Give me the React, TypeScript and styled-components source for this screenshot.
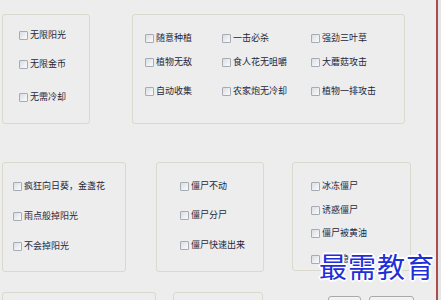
import React from "react";
import styled, { createGlobalStyle } from "styled-components";

const GlobalStyle = createGlobalStyle`
    html, body {
        margin: 0;
        padding: 0;
        background: #ededed;
        overflow: hidden;
    }
    body {
        font-family: "Noto Sans CJK SC", "Liberation Sans", sans-serif;
    }
`;

const Window = styled.div`
    position: relative;
    width: 441px;
    height: 300px;
    display: flex;
    background: #ededed;
    overflow: hidden;
`;

const Panel = styled.div`
    width: 436px;
    height: 300px;
    display: flex;
    flex-direction: column;
    padding-top: 14px;
    box-sizing: border-box;
`;

const Edge = styled.div`
    width: 2px;
    height: 300px;
    background: #ad4c4c;
`;

const Rest = styled.div`
    flex: 1;
    background: #e6e6e6;
`;

const Row = styled.div<{ $mt: number }>`
    display: flex;
    align-items: flex-start;
    flex: none;
    margin-top: ${(p) => p.$mt}px;
    padding-left: 2px;
`;

const Group = styled.div<{ $w: number; $h: number; $ml: number; $pl: number }>`
    box-sizing: border-box;
    flex: none;
    width: ${(p) => p.$w}px;
    height: ${(p) => p.$h}px;
    margin-left: ${(p) => p.$ml}px;
    padding-left: ${(p) => p.$pl}px;
    border: 1px solid #d9d9cd;
    border-radius: 3px;
    display: flex;
`;

const Column = styled.div<{ $w?: number }>`
    display: flex;
    flex-direction: column;
    width: ${(p) => (p.$w ? `${p.$w}px` : "auto")};
`;

const Item = styled.label<{ $mt: number }>`
    display: flex;
    align-items: center;
    gap: 2px;
    height: 12px;
    margin-top: ${(p) => p.$mt}px;
    font-size: 9px;
    line-height: 12px;
    color: #262638;
    white-space: nowrap;
`;

const Box = styled.span`
    box-sizing: border-box;
    width: 9px;
    height: 9px;
    border: 1px solid #a5acb5;
    border-radius: 1px;
    background: linear-gradient(135deg, #d9dde3 0%, #eef0f2 60%, #f9f9f9 100%);
    flex: none;
`;

const Button = styled.div<{ $w: number; $ml: number }>`
    box-sizing: border-box;
    width: ${(p) => p.$w}px;
    height: 16px;
    margin-left: ${(p) => p.$ml}px;
    margin-top: 4px;
    border: 1px solid #a9a9a9;
    border-radius: 3px;
    background: linear-gradient(#f4f4f4, #e2e2e2);
`;

const Watermark = styled.div`
    position: absolute;
    left: 319px;
    top: 252px;
    font-family: "Noto Sans CJK SC", serif;
    font-size: 28px;
    line-height: 1;
    letter-spacing: 1px;
    color: #1f2fd8;
    text-shadow: 1px 1px 0 #fff, -1px -1px 0 #fff, 1px -1px 0 #fff, -1px 1px 0 #fff,
        0 2px 0 #fff, 2px 0 0 #fff, 0 -2px 0 #fff, -2px 0 0 #fff;
`;

type Opt = { label: string; y: number };

function List({ items, w }: { items: Opt[]; w?: number }) {
    let prev = 0;
    return (
        <Column $w={w}>
            {items.map((it, i) => {
                const mt = i === 0 ? it.y - 7 : it.y - prev - 12;
                prev = it.y;
                return (
                    <Item key={it.label} $mt={mt}>
                        <Box />
                        {it.label}
                    </Item>
                );
            })}
        </Column>
    );
}

export default function App() {
    return (
        <>
            <GlobalStyle />
            <Window>
                <Panel>
                    <Row $mt={0}>
                        <Group $w={88} $h={110} $ml={0} $pl={16}>
                            <List
                                items={[
                                    { label: "无限阳光", y: 21 },
                                    { label: "无限金币", y: 50 },
                                    { label: "无需冷却", y: 83 },
                                ]}
                            />
                        </Group>
                        <Group $w={273} $h={110} $ml={42} $pl={12}>
                            <List
                                w={77}
                                items={[
                                    { label: "随意种植", y: 24 },
                                    { label: "植物无敌", y: 48 },
                                    { label: "自动收集", y: 77 },
                                ]}
                            />
                            <List
                                w={89}
                                items={[
                                    { label: "一击必杀", y: 24 },
                                    { label: "食人花无咀嚼", y: 48 },
                                    { label: "农家炮无冷却", y: 77 },
                                ]}
                            />
                            <List
                                items={[
                                    { label: "强劲三叶草", y: 24 },
                                    { label: "大蘑菇攻击", y: 48 },
                                    { label: "植物一排攻击", y: 77 },
                                ]}
                            />
                        </Group>
                    </Row>
                    <Row $mt={38}>
                        <Group $w={124} $h={110} $ml={0} $pl={10}>
                            <List
                                items={[
                                    { label: "疯狂向日葵，金盏花", y: 24 },
                                    { label: "雨点般掉阳光", y: 54 },
                                    { label: "不会掉阳光", y: 84 },
                                ]}
                            />
                        </Group>
                        <Group $w={108} $h={110} $ml={30} $pl={23}>
                            <List
                                items={[
                                    { label: "僵尸不动", y: 24 },
                                    { label: "僵尸分尸", y: 53 },
                                    { label: "僵尸快速出来", y: 83 },
                                ]}
                            />
                        </Group>
                        <Group $w={119} $h={109} $ml={28} $pl={18}>
                            <List
                                items={[
                                    { label: "冰冻僵尸", y: 24 },
                                    { label: "诱惑僵尸", y: 48 },
                                    { label: "僵尸被黄油", y: 71 },
                                    { label: "僵尸隐身", y: 97 },
                                ]}
                            />
                        </Group>
                    </Row>
                    <Row $mt={20}>
                        <Group $w={154} $h={30} $ml={0} $pl={0} />
                        <Group $w={90} $h={30} $ml={17} $pl={0} />
                        <Button $w={33} $ml={65} />
                        <Button $w={45} $ml={8} />
                    </Row>
                </Panel>
                <Edge />
                <Rest />
                <Watermark>最需教育</Watermark>
            </Window>
        </>
    );
}
